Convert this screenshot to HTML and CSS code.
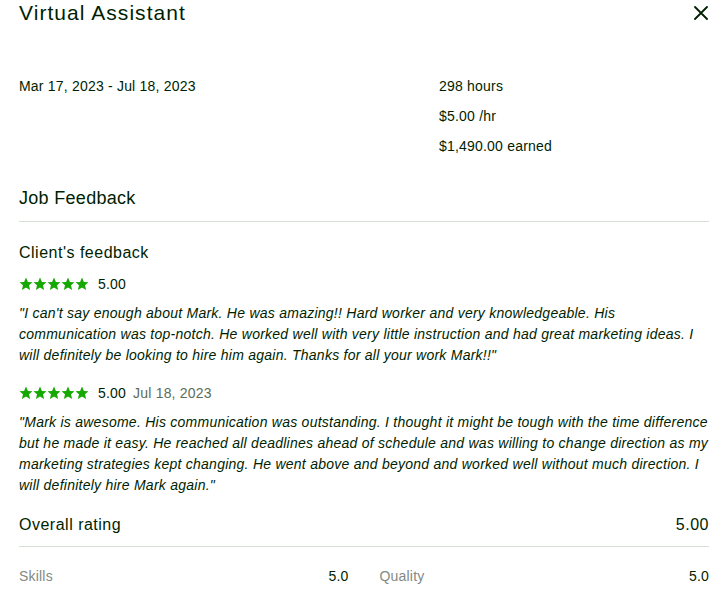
FILE: index.html
```html
<!DOCTYPE html>
<html>
<head>
<meta charset="utf-8">
<link rel="stylesheet" href="styles.css">
</head>
<body>
<div class="modal">
  <div class="header">
    <h1 class="title">Virtual Assistant</h1>
    <button class="close" aria-label="Close">
      <svg width="14" height="14" viewBox="0 0 14 14"><path d="M1 1 L13 13 M13 1 L1 13" stroke="#001e00" stroke-width="1.8" stroke-linecap="round"/></svg>
    </button>
  </div>
  <div class="meta">
    <div class="dates">Mar 17, 2023 - Jul 18, 2023</div>
    <div class="stats">
      <div class="stat"><strong>298</strong> hours</div>
      <div class="stat"><strong>$5.00</strong> /hr</div>
      <div class="stat"><strong>$1,490.00</strong> earned</div>
    </div>
  </div>
  <h2 class="section-title">Job Feedback</h2>
  <hr class="divider">
  <h3 class="sub-title">Client's feedback</h3>
  <div class="review">
    <div class="rating-row">
      <span class="stars">
        <svg viewBox="0 0 14 14"><path d="M7 0.6l1.9 4.3 4.6.4-3.5 3 1.1 4.6L7 10.5l-4.1 2.4 1.1-4.6-3.5-3 4.6-.4z"/></svg><svg viewBox="0 0 14 14"><path d="M7 0.6l1.9 4.3 4.6.4-3.5 3 1.1 4.6L7 10.5l-4.1 2.4 1.1-4.6-3.5-3 4.6-.4z"/></svg><svg viewBox="0 0 14 14"><path d="M7 0.6l1.9 4.3 4.6.4-3.5 3 1.1 4.6L7 10.5l-4.1 2.4 1.1-4.6-3.5-3 4.6-.4z"/></svg><svg viewBox="0 0 14 14"><path d="M7 0.6l1.9 4.3 4.6.4-3.5 3 1.1 4.6L7 10.5l-4.1 2.4 1.1-4.6-3.5-3 4.6-.4z"/></svg><svg viewBox="0 0 14 14"><path d="M7 0.6l1.9 4.3 4.6.4-3.5 3 1.1 4.6L7 10.5l-4.1 2.4 1.1-4.6-3.5-3 4.6-.4z"/></svg>
      </span>
      <span class="score">5.00</span>
    </div>
    <p class="quote">"I can't say enough about Mark. He was amazing!! Hard worker and very knowledgeable. His communication was top-notch. He worked well with very little instruction and had great marketing ideas. I will definitely be looking to hire him again. Thanks for all your work Mark!!"</p>
  </div>
  <div class="review">
    <div class="rating-row">
      <span class="stars">
        <svg viewBox="0 0 14 14"><path d="M7 0.6l1.9 4.3 4.6.4-3.5 3 1.1 4.6L7 10.5l-4.1 2.4 1.1-4.6-3.5-3 4.6-.4z"/></svg><svg viewBox="0 0 14 14"><path d="M7 0.6l1.9 4.3 4.6.4-3.5 3 1.1 4.6L7 10.5l-4.1 2.4 1.1-4.6-3.5-3 4.6-.4z"/></svg><svg viewBox="0 0 14 14"><path d="M7 0.6l1.9 4.3 4.6.4-3.5 3 1.1 4.6L7 10.5l-4.1 2.4 1.1-4.6-3.5-3 4.6-.4z"/></svg><svg viewBox="0 0 14 14"><path d="M7 0.6l1.9 4.3 4.6.4-3.5 3 1.1 4.6L7 10.5l-4.1 2.4 1.1-4.6-3.5-3 4.6-.4z"/></svg><svg viewBox="0 0 14 14"><path d="M7 0.6l1.9 4.3 4.6.4-3.5 3 1.1 4.6L7 10.5l-4.1 2.4 1.1-4.6-3.5-3 4.6-.4z"/></svg>
      </span>
      <span class="score">5.00</span>
      <span class="date">Jul 18, 2023</span>
    </div>
    <p class="quote">"Mark is awesome. His communication was outstanding. I thought it might be tough with the time difference but he made it easy. He reached all deadlines ahead of schedule and was willing to change direction as my marketing strategies kept changing. He went above and beyond and worked well without much direction. I will definitely hire Mark again."</p>
  </div>
  <div class="overall">
    <span class="overall-label">Overall rating</span>
    <span class="overall-score">5.00</span>
  </div>
  <hr class="divider">
  <div class="breakdown">
    <div class="metric"><span class="metric-label">Skills</span><span class="metric-value">5.0</span></div>
    <div class="metric"><span class="metric-label">Quality</span><span class="metric-value">5.0</span></div>
  </div>
</div>
</body>
</html>
```
FILE: styles.css
```css
* { box-sizing: border-box; }
html, body { margin: 0; padding: 0; background: #fff; }
body {
  font-family: "Liberation Sans", Arial, sans-serif;
  color: #001e00;
  font-size: 14px;
  letter-spacing: 0.2px;
}
.modal { padding: 0 19px; }
.header {
  display: flex;
  justify-content: space-between;
  align-items: flex-start;
}
.title {
  margin: 0;
  padding-top: 1px;
  font-size: 21px;
  font-weight: 500;
  line-height: 24px;
  letter-spacing: 1.05px;
}
.close {
  border: 0;
  background: none;
  padding: 0;
  margin: 6px 1px 0 0;
  width: 14px;
  height: 14px;
  display: flex;
}
.meta {
  display: grid;
  grid-template-columns: 420px 1fr;
  margin-top: 51px;
}
.dates { line-height: 20px; }
.stat { line-height: 20px; margin-bottom: 10px; }
.stat strong { font-weight: 500; }
.section-title {
  margin: 20px 0 0;
  font-size: 18px;
  font-weight: 500;
  line-height: 24px;
  letter-spacing: 0.3px;
}
.divider {
  border: 0;
  border-top: 1px solid #d5e0d5;
  margin: 11px 0 0;
}
.sub-title {
  margin: 20px 0 0;
  font-size: 16px;
  font-weight: 500;
  line-height: 22px;
  letter-spacing: 0.5px;
}
.review { margin-top: 10px; }
.review + .review { margin-top: 17px; }
.rating-row {
  display: flex;
  align-items: center;
  gap: 9px;
  line-height: 20px;
}
.stars { display: flex; gap: 0; }
.stars svg { width: 14px; height: 14px; fill: #14a800; }
.score { color: #001e00; }
.date { color: #5e6d55; margin-left: -2px; }
.quote {
  margin: 9px 0 0;
  font-style: italic;
  line-height: 21px;
  letter-spacing: 0.25px;
}
.overall {
  display: flex;
  justify-content: space-between;
  margin-top: 18px;
  font-size: 16px;
  line-height: 22px;
  font-weight: 500;
  letter-spacing: 0.5px;
}
.overall + .divider { margin-top: 10px; }
.breakdown {
  display: grid;
  grid-template-columns: 1fr 1fr;
  column-gap: 31px;
  margin-top: 19px;
}
.metric {
  display: flex;
  justify-content: space-between;
  line-height: 20px;
}
.metric-label { color: #838a83; }
```
